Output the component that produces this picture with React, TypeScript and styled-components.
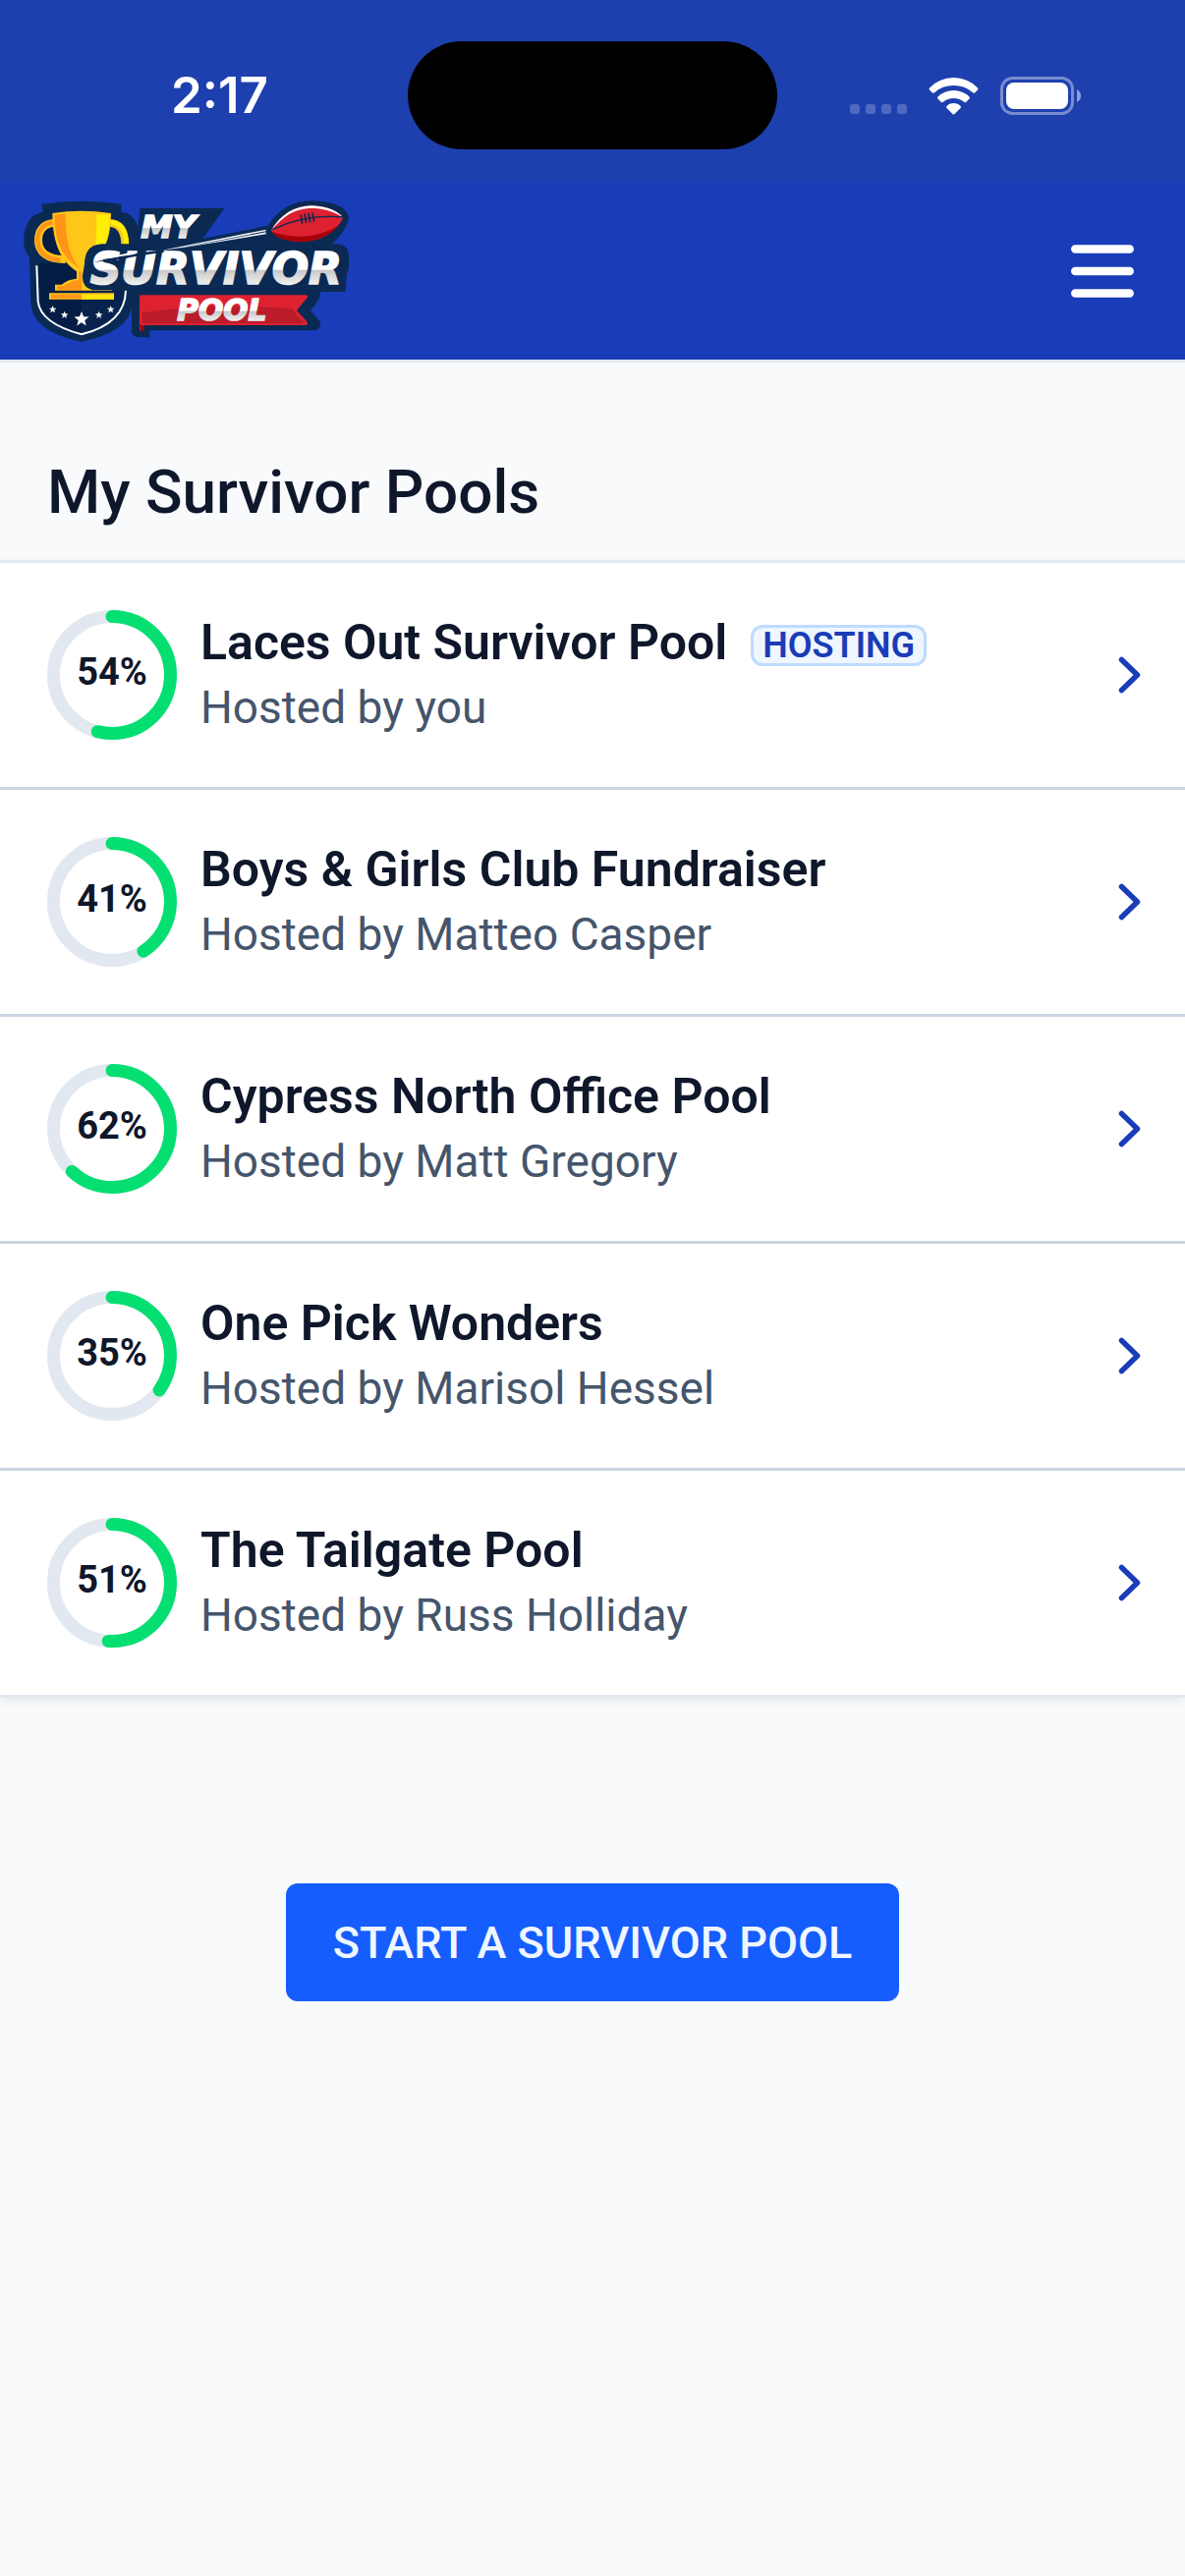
import styled, { createGlobalStyle } from "styled-components";

const GlobalStyle = createGlobalStyle`
  * {
    box-sizing: border-box;
  }
  body {
    margin: 0;
    background-color: #f8fafc;
    color: #0f172b;
    font-family: Roboto, "Liberation Sans", sans-serif;
  }
  h1, h2, p, ul {
    margin: 0;
    padding: 0;
  }
`;

const StatusBar = styled.div`
  display: grid;
  grid-template-columns: 1fr auto 1fr;
  align-items: center;
  padding: 42px 0 34px;
  background-color: #1e40af;
  color: #fff;
`;
const Clock = styled.time`
  padding-left: 32px;
  text-align: center;
  font-family: Inter, sans-serif;
  font-size: 51px;
  font-weight: 600;
  line-height: 60px;
`;
const Island = styled.div`
  width: 376px;
  height: 110px;
  border-radius: 55px;
  background-color: #000;
`;
const StatusIcons = styled.div`
  display: flex;
  justify-content: center;
  align-items: flex-end;
  gap: 22px;
  padding-right: 32px;
  svg {
    display: block;
  }
`;

const Header = styled.header`
  display: flex;
  justify-content: space-between;
  align-items: center;
  padding: 18px 52px 18px 24px;
  border-bottom: 3px solid #e2e8f0;
  background-color: #193cb8;
`;
const LogoLink = styled.a`
  display: block;
  svg {
    display: block;
  }
`;
const MenuButton = styled.button`
  display: flex;
  padding: 0;
  border: none;
  background: none;
  color: #fff;
  cursor: pointer;
`;

const Title = styled.h1`
  padding: 96px 48px 33px;
  font-size: 62px;
  font-weight: 500;
  line-height: 72px;
`;
const PoolList = styled.ul`
  list-style: none;
  border-top: 3px solid #e2e8f0;
  border-bottom: 3px solid #e2e8f0;
  background-color: #fff;
  box-shadow: 0 3px 9px rgb(0 0 0 / 8%);
  li + li {
    border-top: 3px solid #cad5e2;
  }
`;
const PoolRow = styled.a`
  display: flex;
  align-items: center;
  gap: 24px;
  padding: 48px 36px 48px 48px;
  color: inherit;
  text-decoration: none;
`;
const Ring = styled.div`
  display: grid;
  place-items: center;
  flex-shrink: 0;
  svg,
  span {
    grid-area: 1 / 1;
    display: block;
  }
  span {
    padding-bottom: 6px;
    font-size: 38px;
    font-weight: 700;
    line-height: 42px;
  }
`;
const PoolInfo = styled.div`
  flex: 1;
  min-width: 0;
`;
const NameLine = styled.div`
  display: flex;
  align-items: flex-end;
  gap: 24px;
`;
const PoolName = styled.h2`
  font-size: 50px;
  font-weight: 600;
  line-height: 66px;
`;
const Badge = styled.span`
  margin-bottom: 9px;
  padding: 0 9px;
  border: 3px solid #bedbff;
  border-radius: 12px;
  background-color: #eff6ff;
  color: #193cb8;
  font-size: 36px;
  font-weight: 600;
  line-height: 36px;
`;
const Host = styled.p`
  color: #45556c;
  font-size: 46px;
  line-height: 66px;
`;

const Actions = styled.div`
  display: flex;
  justify-content: center;
  padding: 189px 48px;
`;
const StartButton = styled.button`
  height: 120px;
  padding: 0 48px;
  border: none;
  border-radius: 12px;
  background-color: #155dfc;
  color: #eff6ff;
  font-family: inherit;
  font-size: 45px;
  font-weight: 500;
  text-transform: uppercase;
  cursor: pointer;
`;

const pools = [
  { name: "Laces Out Survivor Pool", host: "you", percent: 54, hosting: true },
  { name: "Boys & Girls Club Fundraiser", host: "Matteo Casper", percent: 41 },
  { name: "Cypress North Office Pool", host: "Matt Gregory", percent: 62 },
  { name: "One Pick Wonders", host: "Marisol Hessel", percent: 35 },
  { name: "The Tailgate Pool", host: "Russ Holliday", percent: 51 },
];

const star = "M0 -10 2.6 -3.4 9.5 -3.1 4.1 1.3 5.9 8.1 0 4.2 -5.9 8.1 -4.1 1.3 -9.5 -3.1 -2.6 -3.4Z";
const stars = [
  [161, 374, 1.2],
  [197, 391, 1.2],
  [249, 404, 2.4],
  [302, 391, 1.2],
  [338, 374, 1.2],
];

const Logo = () => (
  <svg width="332" height="144" viewBox="72 41 996 432" role="img" aria-label="My Survivor Pool">
    <defs>
      <linearGradient id="chrome" x1="0" y1="0" x2="0" y2="1">
        <stop offset="0.52" stopColor="#fff" />
        <stop offset="0.54" stopColor="#c8c8ca" />
        <stop offset="0.82" stopColor="#f0f0f0" />
      </linearGradient>
    </defs>
    <path
      d="M128 52Q248 34 371 52V77Q412 82 421 125L428 64H686L619 158 818 118Q865 42 955 42 1062 46 1065 98 1058 130 1015 174H1030Q1065 176 1065 212V250L1058 268 1055 320H978Q982 340 948 377L976 410Q986 436 955 438H457V459H425Q402 458 402 440V362Q398 440 249 473 96 440 94 352L90 214Q72 195 72 162 77 85 130 77Z"
      fill="#0a2a54"
    />
    <path d="M118 232 122 350Q132 414 249 444V226Z" fill="#051c44" />
    <path d="M249 226V444Q370 414 376 350V316L340 200Z" fill="#08244e" />
    <path d="M161 108Q112 112 116 165 122 212 188 220L230 250 180 180Z" fill="#051c44" />
    <path d="M112 240 116 350Q124 416 249 450 382 416 384 316" fill="none" stroke="#fff" strokeWidth="6" />
    <path d="M166 110C134 110 117 134 117 162 117 200 146 222 200 221" fill="none" stroke="#ffc31c" strokeWidth="24" />
    <path d="M162 108C132 110 115 134 115 162 115 198 142 221 184 223" fill="none" stroke="#ff9518" strokeWidth="13" />
    <path d="M332 110C368 110 382 136 382 180V194" fill="none" stroke="#ffc61a" strokeWidth="24" />
    <path d="M332 107C372 108 386 136 386 180V194" fill="none" stroke="#ffee05" strokeWidth="14" />
    <path d="M160 80Q249 66 339 80C338 150 326 200 262 244V286H342V316H168V298H188Q206 282 234 280V258C190 228 160 180 160 80Z" fill="#ffc61a" />
    <path d="M166 84 200 82C200 160 212 210 244 250 192 216 167 170 166 84Z" fill="#ff9518" />
    <path d="M295 84 335 84C334 150 322 195 286 222 294 170 295 130 295 84Z" fill="#ffee05" />
    <path d="M240 258H249V314H174V302H194Q214 288 240 284Z" fill="#ff9518" />
    <path d="M150 324H348V343H150Z" fill="#ffc61a" />
    <path d="M156 328H249V340H156Z" fill="#ff9518" />
    <path d="M249 328H348V343H249Z" fill="#ffe30c" />
    {stars.map(([x, y, scale]) => (
      <path key={x} d={star} fill="#fff" transform={`translate(${x} ${y}) scale(${scale})`} />
    ))}
    <path d="M258 236Q258 176 312 174H500V315H282Q250 306 252 270Z" fill="#0a2a54" />
    <path d="M426 336Q426 330 432 330H936Q942 332 938 338L906 377 938 412Q942 420 934 422H441V436L430 440 426 436Z" fill="#de2130" />
    <path d="M434 384Q640 352 892 372L906 392 930 416H434Z" fill="#ba1c29" />
    <path d="M427 420 441 424V436L430 441Z" fill="#8d0b18" />
    <path d="M480 196 812 130V135L560 184ZM540 189 812 138V144Z" fill="#eef1f4" />
    <path d="M828 133C856 84 900 57 952 57 1002 58 1034 76 1048 94 1024 140 980 166 920 167 870 166 842 154 828 133Z" fill="#dd2131" />
    <path d="M830 136C900 162 980 154 1034 116 1008 150 968 166 920 167 872 166 844 156 830 136Z" fill="#a50208" />
    <path d="M828 133C856 84 900 57 952 57 1002 58 1034 76 1046 92 1010 70 980 65 944 65 896 68 864 90 828 133Z" fill="#fff" />
    <path d="M832 130Q930 82 1047 92" fill="none" stroke="#0a2a54" strokeWidth="4" />
    <path d="M918 84 923 112M930 81 935 109M942 80 947 108M954 78 959 106" stroke="#0a2a54" strokeWidth="5" />
    <g
      fontFamily="'DejaVu Sans', sans-serif"
      fontStyle="italic"
      fontWeight="700"
      fill="url(#chrome)"
      stroke="url(#chrome)"
      strokeWidth="5"
    >
      <text x="430" y="155" fontSize="98">MY</text>
      <text x="275" y="295" fontSize="132">SURVIVOR</text>
      <text x="541" y="407" fontSize="89">POOL</text>
    </g>
    <path d="M286 230Q350 212 480 194L500 190 500 200Q420 208 370 222 330 222 286 230Z" fill="#0a2a54" />
    <path d="M300 224Q350 208 418 198L408 206Q360 212 300 224Z" fill="#fff" />
  </svg>
);

const ProgressRing = ({ percent }: { percent: number }) => (
  <Ring>
    <svg width="132" height="132" viewBox="0 0 132 132" fill="none" strokeWidth="13" aria-hidden="true">
      <circle cx="66" cy="66" r="59.5" stroke="#e2e8f0" />
      <circle
        cx="66"
        cy="66"
        r="59.5"
        stroke="#05df72"
        strokeLinecap="round"
        pathLength={100}
        strokeDasharray={`${percent} 100`}
        transform="rotate(-90 66 66)"
      />
    </svg>
    <span>{percent}%</span>
  </Ring>
);

const App = () => {
  return (
    <>
      <GlobalStyle />
      <StatusBar>
        <Clock>2:17</Clock>
        <Island />
        <StatusIcons>
          <svg width="58" height="11" viewBox="0 0 58 11" fill="#fff" fillOpacity="0.22">
            <rect x="0" width="10" height="10" rx="3" />
            <rect x="16" width="10" height="10" rx="3" />
            <rect x="32" width="10" height="10" rx="3" />
            <rect x="48" width="10" height="10" rx="3" />
          </svg>
          <svg width="51" height="39" viewBox="0 0 51 39" fill="#fff">
            <path d="M1 11.5Q11 1 25.500 1T50 11.500Q51 12.500 50 13.500L47 16.500Q46 17 45 16.200 37 9 25.500 9T6 16.200Q5 17 4 16.500L1 13.500Q0 12.500 1 11.500Z" />
            <path d="M9.500 20.500Q16 14 25.500 14T41.500 20.500Q42.500 21.500 41.500 22.500L38 26Q37 26.500 36 25.700 31.500 22 25.500 22T15 25.700Q14 26.500 13 26L9.500 22.500Q8.500 21.500 9.500 20.500Z" />
            <path d="M18.500 30Q21 27 25.500 27T32.500 30Q33.500 31 32.500 32L26.500 38Q25.500 39 24.500 38L18.500 32Q17.500 31 18.500 30Z" />
          </svg>
          <svg width="82" height="39" viewBox="0 0 82 39">
            <rect x="1.500" y="1.500" width="72" height="36" rx="11" fill="none" stroke="#fff" strokeOpacity="0.4" strokeWidth="3" />
            <rect x="6" y="6" width="63" height="27" rx="8" fill="#fff" />
            <path d="M78 13Q82 15 82 19.500T78 26Z" fill="#fff" fillOpacity="0.5" />
          </svg>
        </StatusIcons>
      </StatusBar>
      <Header>
        <LogoLink href="#">
          <Logo />
        </LogoLink>
        <MenuButton aria-label="Open menu">
          <svg width="64" height="54" viewBox="0 0 64 54" stroke="currentColor" strokeWidth="8.5" strokeLinecap="round">
            <path d="M4.300 4.500H59.700M4.300 27H59.700M4.300 49.500H59.700" />
          </svg>
        </MenuButton>
      </Header>
      <main>
        <Title>My Survivor Pools</Title>
        <PoolList>
          {pools.map((pool) => (
            <li key={pool.name}>
              <PoolRow href="#">
                <ProgressRing percent={pool.percent} />
                <PoolInfo>
                  <NameLine>
                    <PoolName>{pool.name}</PoolName>
                    {pool.hosting && <Badge>HOSTING</Badge>}
                  </NameLine>
                  <Host>Hosted by {pool.host}</Host>
                </PoolInfo>
                <svg width="48" height="48" viewBox="0 0 48 48" fill="none" stroke="#193cb8" strokeWidth="5.5" strokeLinecap="round" strokeLinejoin="round">
                  <path d="M19.500 8.500 35.500 24 19.500 39.500" />
                </svg>
              </PoolRow>
            </li>
          ))}
        </PoolList>
        <Actions>
          <StartButton>Start a Survivor Pool</StartButton>
        </Actions>
      </main>
    </>
  );
};
export default App;
